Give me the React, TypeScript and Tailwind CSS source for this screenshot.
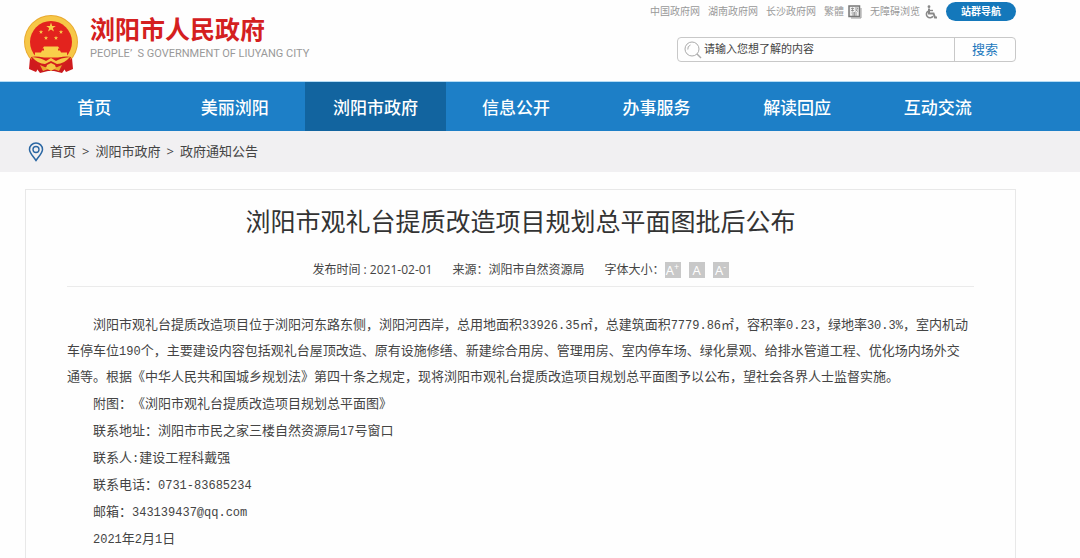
import React, { FormEvent, useState } from 'react'

type MenuItem = {
	text: string
	active?: boolean
}

const TOP_LINKS = ['中国政府网', '湖南政府网', '长沙政府网']

const MENU: MenuItem[] = [
	{ text: '首页' },
	{ text: '美丽浏阳' },
	{ text: '浏阳市政府', active: true },
	{ text: '信息公开' },
	{ text: '办事服务' },
	{ text: '解读回应' },
	{ text: '互动交流' }
]

const BREADCRUMB = ['首页', '浏阳市政府', '政府通知公告']

const INTRO = [
	'浏阳市观礼台提质改造项目位于浏阳河东路东侧，浏阳河西岸，总用地面积33926.35㎡，总建筑面积7779.86㎡，容积率0.23，绿地率30.3%，室内机动',
	'车停车位190个，主要建设内容包括观礼台屋顶改造、原有设施修缮、新建综合用房、管理用房、室内停车场、绿化景观、给排水管道工程、优化场内场外交',
	'通等。根据《中华人民共和国城乡规划法》第四十条之规定，现将浏阳市观礼台提质改造项目规划总平面图予以公布，望社会各界人士监督实施。'
]

const DETAILS = [
	'附图：《浏阳市观礼台提质改造项目规划总平面图》',
	'联系地址：浏阳市市民之家三楼自然资源局17号窗口',
	'联系人:建设工程科戴强',
	'联系电话：0731-83685234',
	'邮箱：343139437@qq.com',
	'2021年2月1日'
]

const STAR = 'M0-5 1.2-1.6 4.8-1.5 1.9.6 2.9 4 0 2-2.9 4-1.9.6-4.8-1.5-1.2-1.6Z'

function Emblem() {
	return (
		<svg viewBox="0 0 54 58" className="w-[54px] h-[58px] shrink-0" aria-hidden="true">
			<path d="M7 41 6 53l7 1 3 4 8-2h6l8 2 3-4 7-1-1-12Z" fill="#c9181d" />
			<circle cx="27" cy="27" r="27" fill="#e9a92f" />
			<circle cx="27" cy="27" r="26" fill="#f6c747" />
			<circle cx="27" cy="27" r="21" fill="#e3231e" />
			<g fill="#f9cf4a">
				<path d={STAR} transform="translate(27 12.5)" />
				<path d={STAR} transform="translate(17 17) scale(.45)" />
				<path d={STAR} transform="translate(37 17) scale(.45)" />
				<path d={STAR} transform="translate(22 23) scale(.45)" />
				<path d={STAR} transform="translate(32 23) scale(.45)" />
				<path d="M20 31.5h14l1.5 2h-1.5v2h2l1 2h6v5H11v-5h6l1-2h2v-2h-1.500Z" />
			</g>
			<path d="M7 42q10-2 20 5 10-7 20-5l-2 8-8 5H17l-8-5Z" fill="#d21d1c" />
			<path
				d="M8 42q10 1 14 4l5-3 5 3q4-3 14-4-6 7-13 7l-6-3-6 3Q14 49 8 42Z"
				fill="#f6c747"
			/>
			<path d="M16 50q5 3 11 3t11-3l-3 6q-4-2-8-2t-8 2Z" fill="#e9a92f" />
			<path d="m22 53 1-3 2-1 2-1 2 1 2 1 1 3-5 3Z" fill="#f6c747" />
			<path d="m6 43 9 9-3 5-7-3ZM48 43l-9 9 3 5 7-3Z" fill="#cf1a1d" />
		</svg>
	)
}

function IconTraditional() {
	return (
		<svg viewBox="0 0 14 14" className="w-3.5 h-3.5" aria-hidden="true">
			<path d="M3 13h10V3" fill="none" stroke="#999" />
			<rect x="1" y="1" width="10.500" height="10.500" fill="#eee" stroke="#777" strokeWidth="1.500" />
			<path
				d="M3 3.500h3M3 5.500h3M4.500 2.500v4M7 3h3L7.500 6.500M7.500 4.500l2.500 2M3.500 8h5.500M4 10h5M6.300 7v4"
				fill="none"
				stroke="#888"
				strokeWidth=".8"
			/>
		</svg>
	)
}

function IconWheelchair() {
	return (
		<svg viewBox="0 0 14 14" className="w-3.5 h-3.5" fill="none" stroke="#888" aria-hidden="true">
			<circle cx="5" cy="1.700" r="1.400" fill="#888" stroke="none" />
			<path d="M5 3.500v5h4.500l1.500 4h2" strokeWidth="2" />
			<path d="M5 5.500h4" strokeWidth="1.400" />
			<path d="M4 6.200a3.600 3.600 0 1 0 5 5" strokeWidth="1.600" />
		</svg>
	)
}

function IconSearch() {
	return (
		<svg viewBox="0 0 18 18" className="w-[18px] h-[18px]" fill="none" stroke="#aaa" aria-hidden="true">
			<circle cx="8" cy="8" r="7" />
			<path d="M3.800 8.500A4.200 4.200 0 0 1 6.500 4" />
			<path d="m13 13 4 4" strokeWidth="1.500" />
		</svg>
	)
}

function IconPin() {
	return (
		<svg viewBox="0 0 16 20" className="w-4 h-5" fill="none" stroke="#2b67a3" aria-hidden="true">
			<path
				d="M8 18.500C5 14 1.500 11 1.500 7.500a6.500 6.500 0 0 1 13 0c0 3.500-3.500 6.500-6.500 11Z"
				strokeWidth="1.500"
			/>
			<circle cx="8" cy="7.500" r="3" strokeWidth="1.400" />
		</svg>
	)
}

// Digits and latin letters go in a monospaced face
function MixedText({ text }: { text: string }) {
	return (
		<>
			{text.split(/([\x20-\x7e]+)/).map((part, i) =>
				i % 2 == 1 ? (
					<span
						key={i}
						className="font-['Liberation_Mono',monospace] text-[12px] leading-none"
					>
						{part}
					</span>
				) : (
					part
				)
			)}
		</>
	)
}

export default function App() {
	const [keyword, setKeyword] = useState('')

	const handleSearch = (e: FormEvent) => e.preventDefault()

	return (
		<div className="bg-[#fefefe] text-[#444] font-['Open_Sans','Noto_Sans_CJK_SC',sans-serif]">
			<header className="flex justify-between items-start h-[82px] pl-6 pr-16 border-b border-[#b5dcf5]">
				<a href="#" className="flex gap-3 pt-[15px]">
					<Emblem />
					<div>
						<h1 className="text-[25px] leading-7 font-bold text-[#d4201f]">浏阳市人民政府</h1>
						<p className="text-[11px] leading-[22px] text-[#999] font-['Roboto',sans-serif]">
							PEOPLE’&nbsp; S GOVERNMENT OF LIUYANG CITY
						</p>
					</div>
				</a>
				<div className="flex flex-col items-end gap-4 pt-0.5">
					<div className="flex items-center gap-2 text-[10px] leading-[19px] text-[#999]">
						{TOP_LINKS.map((text) => (
							<a key={text} href="#">
								{text}
							</a>
						))}
						<a href="#" className="flex items-center gap-1">
							繁體
							<IconTraditional />
						</a>
						<a href="#" className="flex items-center gap-1">
							无障碍浏览
							<IconWheelchair />
						</a>
						<button className="w-[70px] rounded-full bg-[#1478bb] font-bold text-white">
							站群导航
						</button>
					</div>
					<form
						onSubmit={handleSearch}
						className="flex w-[339px] h-[25px] border border-[#c8c8c8] rounded"
					>
						<label htmlFor="keyword" className="flex items-center pl-1.5 pr-0.5">
							<IconSearch />
						</label>
						<input
							id="keyword"
							name="keyword"
							aria-label="搜索内容"
							value={keyword}
							placeholder="请输入您想了解的内容"
							onChange={(e) => setKeyword(e.target.value)}
							className="flex-1 min-w-0 text-[11px] outline-none placeholder:text-[#444]"
						/>
						<button className="w-[61px] border-l border-[#c8c8c8] text-[13px] text-[#1c78bd]">
							搜索
						</button>
					</form>
				</div>
			</header>
			<nav className="grid grid-cols-7 pl-6 pr-[72px] bg-[#1d7fc7]">
				{MENU.map(({ text, active }) => (
					<a
						key={text}
						href="#"
						className={`text-center text-[17px] leading-[51px] h-[49px] font-medium text-white ${active ? 'bg-[#12649f]' : ''}`}
					>
						{text}
					</a>
				))}
			</nav>
			<div className="flex items-center gap-1.5 h-[41px] pl-7 bg-[#f1f0f2] text-[13px]">
				<IconPin />
				{BREADCRUMB.map((text, i) => (
					<React.Fragment key={text}>
						{i > 0 && <span>&gt;</span>}
						<a href="#">{text}</a>
					</React.Fragment>
				))}
			</div>
			<main className="ml-[25px] mr-16 mt-[17px] px-[41px] pt-[11px] border border-b-0 border-[#e8e8e8]">
				<h2 className="text-center text-[25px] leading-10 text-[#333]">
					浏阳市观礼台提质改造项目规划总平面图批后公布
				</h2>
				<div className="flex justify-center items-center gap-5 mt-[13px] h-[33px] border-b border-[#ebebeb] text-[12px]">
					<span>发布时间 : 2021-02-01</span>
					<span>来源：浏阳市自然资源局</span>
					<div className="flex items-center">
						<span>字体大小：</span>
						<div className="flex gap-2">
							{['+', '', '-'].map((sign) => (
								<button
									key={sign}
									className="flex justify-center w-4 h-4 bg-[#c8c8c8] text-[13px] leading-4 text-white"
								>
									A{sign && <span className="text-[9px] leading-[10px]">{sign}</span>}
								</button>
							))}
						</div>
					</div>
				</div>
				<article className="flex flex-col gap-px pt-6 pb-2 text-[13px] leading-[26px] font-['Noto_Sans_CJK_SC',sans-serif] [text-spacing-trim:space-all]">
					<p className="indent-[26px]">
						{INTRO.map((line) => (
							<React.Fragment key={line}>
								<MixedText text={line} />
								<br />
							</React.Fragment>
						))}
					</p>
					{DETAILS.map((text) => (
						<p key={text} className="indent-[26px]">
							<MixedText text={text} />
						</p>
					))}
				</article>
			</main>
		</div>
	)
}
